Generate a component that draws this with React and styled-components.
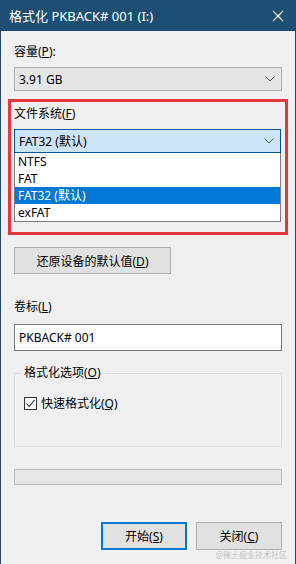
import React from 'react';
import styled, { createGlobalStyle } from 'styled-components';

const GlobalStyle = createGlobalStyle`
    html, body {
        margin: 0;
        padding: 0;
        background: #f0f0f0;
    }
    body {
        font-family: "Noto Sans", "Noto Sans CJK SC", sans-serif;
        font-size: 12px;
        color: #000;
    }
`;

const Window = styled.div`
    width: 296px;
    height: 564px;
    box-sizing: border-box;
    display: flex;
    flex-direction: column;
    background: #f0f0f0;
    border-left: 1px solid #1d4d72;
    border-right: 1px solid #1d4d72;
    overflow: hidden;
`;

const TitleBar = styled.div`
    height: 31px;
    flex-shrink: 0;
    display: flex;
    align-items: center;
    justify-content: space-between;
    background: #1d4f75;
    color: #fff;
    padding: 0 10px 0 9px;
    font-size: 13px;
    margin: 0 -1px;
`;

const CloseIcon = styled.svg`
    width: 12px;
    height: 12px;
    margin-right: 2px;
`;

const Body = styled.div`
    display: flex;
    flex-direction: column;
    padding: 0 13px;
`;

const Label = styled.div`
    height: 16px;
    line-height: 16px;
    margin-top: ${(p) => p.$top || 0}px;
`;

const Combo = styled.div`
    height: 24px;
    box-sizing: border-box;
    margin-top: 7px;
    display: flex;
    align-items: center;
    justify-content: space-between;
    padding: 0 6px 0 4px;
    background: ${(p) => (p.$focused ? '#cce4f7' : '#e5e5e5')};
    border: 1px solid ${(p) => (p.$focused ? '#005499' : '#adadad')};
`;

const Chevron = () => (
    <svg width="10" height="6" viewBox="0 0 10 6">
        <path d="M0.5 0.5 L5 5 L9.5 0.5" fill="none" stroke="#555" strokeWidth="1" />
    </svg>
);

const RedBox = styled.div`
    margin: 8px -6px 0 -6px;
    padding: 4px 4px 10px 3px;
    border: 3px solid #e8383d;
    display: flex;
    flex-direction: column;
`;

const List = styled.div`
    border: 1px solid #7a7a7a;
    border-top: none;
    background: #fff;
`;

const ListItem = styled.div`
    height: 17px;
    line-height: 17px;
    padding-left: 3px;
    background: ${(p) => (p.$selected ? '#0078d7' : '#fff')};
    color: ${(p) => (p.$selected ? '#fff' : '#000')};
`;

const Button = styled.button`
    font: inherit;
    color: #000;
    height: ${(p) => p.$h || 28}px;
    width: ${(p) => p.$w}px;
    box-sizing: border-box;
    padding: 0;
    background: #e1e1e1;
    border: ${(p) => (p.$default ? '2px solid #0078d7' : '1px solid #adadad')};
    cursor: pointer;
`;

const RestoreButton = styled(Button)`
    margin-top: 12px;
    align-self: flex-start;
`;

const TextInput = styled.div`
    height: 27px;
    box-sizing: border-box;
    margin-top: 9px;
    background: #fff;
    border: 1px solid #7a7a7a;
    display: flex;
    align-items: center;
    padding-left: 4px;
`;

const GroupBox = styled.fieldset`
    margin: 14px 0 0 0;
    padding: 14px 6px 35px 6px;
    border: 1px solid #dcdcdc;
    min-width: 0;
`;

const Legend = styled.legend`
    padding: 0 3px;
    height: 16px;
    line-height: 16px;
`;

const CheckRow = styled.label`
    display: flex;
    align-items: center;
    gap: 4px;
    height: 16px;
    padding-left: 3px;
`;

const CheckBox = styled.span`
    width: 13px;
    height: 13px;
    box-sizing: border-box;
    border: 1px solid #333;
    background: #fff;
    display: flex;
    align-items: center;
    justify-content: center;
`;

const Progress = styled.div`
    height: 16px;
    box-sizing: border-box;
    margin-top: 22px;
    background: #e6e6e6;
    border: 1px solid #bcbcbc;
`;

const ButtonRow = styled.div`
    display: flex;
    justify-content: flex-end;
    gap: 9px;
    margin-top: 37px;
`;

const Watermark = styled.div`
    align-self: flex-end;
    margin-top: 0;
    margin-right: -5px;
    font-size: 8px;
    line-height: 10px;
    color: #c4c4c4;
`;

const App = () => (
    <>
        <GlobalStyle />
        <Window>
            <TitleBar>
                <span>格式化 PKBACK# 001 (I:)</span>
                <CloseIcon viewBox="0 0 12 12">
                    <path d="M1 1 L11 11 M11 1 L1 11" stroke="#fff" strokeWidth="1.1" />
                </CloseIcon>
            </TitleBar>
            <Body>
                <Label $top={13}>
                    容量(<u>P</u>):
                </Label>
                <Combo>
                    <span>3.91 GB</span>
                    <Chevron />
                </Combo>

                <RedBox>
                    <Label>
                        文件系统(<u>F</u>)
                    </Label>
                    <Combo $focused>
                        <span>FAT32 (默认)</span>
                        <Chevron />
                    </Combo>
                    <List>
                        <ListItem>NTFS</ListItem>
                        <ListItem>FAT</ListItem>
                        <ListItem $selected>FAT32 (默认)</ListItem>
                        <ListItem>exFAT</ListItem>
                    </List>
                </RedBox>

                <RestoreButton $w={157} $h={27}>
                    还原设备的默认值(<u>D</u>)
                </RestoreButton>

                <Label $top={25}>
                    卷标(<u>L</u>)
                </Label>
                <TextInput>PKBACK# 001</TextInput>

                <GroupBox>
                    <Legend>
                        格式化选项(<u>O</u>)
                    </Legend>
                    <CheckRow>
                        <CheckBox>
                            <svg width="11" height="11" viewBox="0 0 11 11">
                                <path d="M1.5 5.5 L4.2 8.5 L9.5 2" fill="none" stroke="#222" strokeWidth="1.1" />
                            </svg>
                        </CheckBox>
                        <span>
                            快速格式化(<u>Q</u>)
                        </span>
                    </CheckRow>
                </GroupBox>

                <Progress />

                <ButtonRow>
                    <Button $w={86} $default>
                        开始(<u>S</u>)
                    </Button>
                    <Button $w={86}>
                        关闭(<u>C</u>)
                    </Button>
                </ButtonRow>
                <Watermark>@稀土掘金技术社区</Watermark>
            </Body>
        </Window>
    </>
);

export default App;
